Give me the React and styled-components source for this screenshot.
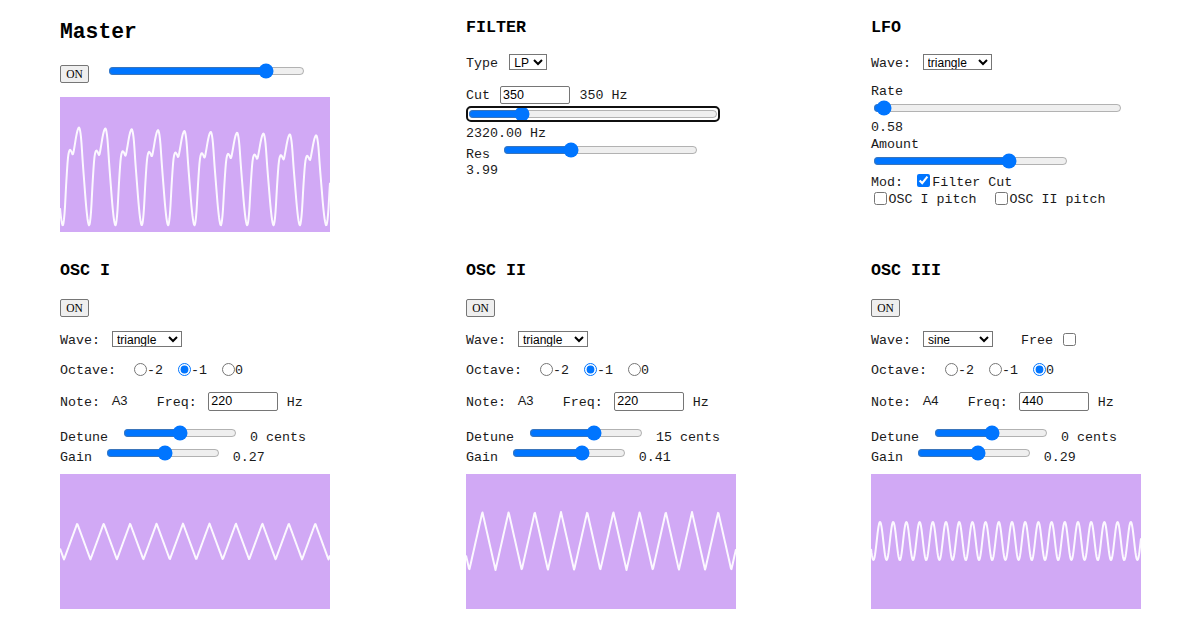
import React from "react";
import styled, { css, createGlobalStyle } from "styled-components";

// scope drawing -------------------------------------

const SCOPE_W = 270;
const SCOPE_H = 135;

const tri = phase => {
	const p = phase - Math.floor(phase);
	return 1 - 4 * Math.abs(p - 0.5);
};

// one period of the mixed master signal, 16 samples (page y inside the first scope)
const masterKeys = [225, 212, 182, 158, 150, 151, 154, 146, 136, 129, 127.5, 138, 162, 184, 205, 220];

const masterY = x => {
	const ph = (x - 3) / 26.35;
	const u = (ph - Math.floor(ph)) * 16;
	const i = Math.floor(u);
	const t = u - i;
	const k = j => masterKeys[((j % 16) + 16) % 16];
	const p0 = k(i - 1);
	const p1 = k(i);
	const p2 = k(i + 1);
	const p3 = k(i + 2);
	const v =
		0.5 *
		(2 * p1 +
			(-p0 + p2) * t +
			(2 * p0 - 5 * p1 + 4 * p2 - p3) * t * t +
			(-p0 + 3 * p1 - 3 * p2 + p3) * t * t * t);
	const s = 1 - (0.09 * x) / SCOPE_W;
	return 225 - (225 - v) * s - 97;
};

const waves = {
	master: masterY,
	osc1: x => 67.5 - 18 * tri((x - 4) / 26.45),
	osc2: x => 67 - 29 * tri((x - 3.3) / 26.2),
	osc3: x => 67 - 19 * Math.cos((2 * Math.PI * (x - 9)) / 13.2)
};

const wavePath = fn => {
	let d = "";
	for (let x = 0; x <= SCOPE_W; x += 0.5) {
		d += (x === 0 ? "M" : "L") + x.toFixed(1) + " " + fn(x).toFixed(2);
	}
	return d;
};

// components ----------------------------------------

const Scope = ({ wave, mt }) => (
	<ScopeBox $mt={mt}>
		<svg width={SCOPE_W} height={SCOPE_H}>
			<path d={wavePath(waves[wave])} fill="none" stroke="#fff" strokeWidth="2" strokeOpacity="0.92" strokeLinejoin="round" />
		</svg>
	</ScopeBox>
);

const WaveSelect = ({ value, ml, w }) => (
	<Select $ml={ml} $w={w} defaultValue={value}>
		<option>sine</option>
		<option>square</option>
		<option>sawtooth</option>
		<option>triangle</option>
	</Select>
);

const Slider = ({ value, ml, w, lift, focus }) => (
	<Range type="range" min="0" max="1000" defaultValue={value} $ml={ml} $w={w} $lift={lift} $focus={focus} />
);

const Osc = ({ title, wave, octave, note, freq, detune, gain, gainValue, detuneValue, free, scope }) => (
	<Panel>
		<Heading $size={16.67} $mt={11}>
			{title}
		</Heading>
		<Row $mt={18} $h={18}>
			<ToggleButton>ON</ToggleButton>
		</Row>
		<Row $mt={14} $h={16}>
			<Text>Wave:</Text>
			<WaveSelect value={wave} ml={12} w={69.5} />
			{free && (
				<>
					<Text $ml={28.5}>Free</Text>
					<Check type="checkbox" $ml={9.5} />
				</>
			)}
		</Row>
		<Row $mt={14.3} $h={16}>
			<Text>Octave:</Text>
			{["-2", "-1", "0"].map((o, i) => (
				<React.Fragment key={o}>
					<Radio type="radio" name={title} defaultChecked={o === octave} $ml={i === 0 ? 18 : 15} />
					<Text>{o}</Text>
				</React.Fragment>
			))}
		</Row>
		<Row $mt={15} $h={18}>
			<Text>Note:</Text>
			<NoteValue>{note}</NoteValue>
			<Text>Freq:</Text>
			<TextInput $ml={11.6} defaultValue={freq} />
			<Text $ml={9}>Hz</Text>
		</Row>
		<Row $mt={18.4} $h={16}>
			<Text>Detune</Text>
			<Slider value={detune} ml={14.7} w={114.6} lift />
			<Text $ml={12.7}>{detuneValue} cents</Text>
		</Row>
		<Row $mt={4} $h={16}>
			<Text>Gain</Text>
			<Slider value={gain} ml={14} w={114} lift />
			<Text $ml={12.7}>{gainValue}</Text>
		</Row>
		<Scope wave={scope} mt={9.3} />
	</Panel>
);

export default function App() {
	return (
		<>
			<GlobalStyle />
			<Page>
				<Panel>
					<Heading $size={21.33} $lh={26} $mt={18.5}>
						Master
					</Heading>
					<Row $mt={20.5} $h={18}>
						<ToggleButton>ON</ToggleButton>
						<Slider value={827} ml={19} w={197} lift />
					</Row>
					<Scope wave="master" mt={14} />
				</Panel>

				<Panel>
					<Heading $size={16.67} $mt={17.5}>
						FILTER
					</Heading>
					<Row $mt={16.8} $h={16}>
						<Text>Type</Text>
						<Select $ml={11.3} $w={38} defaultValue="LP">
							<option>LP</option>
							<option>HP</option>
							<option>BP</option>
						</Select>
					</Row>
					<Row $mt={15.7} $h={18}>
						<Text>Cut</Text>
						<TextInput $ml={10} defaultValue="350" />
						<Text $ml={10}>350 Hz</Text>
					</Row>
					<Row $mt={4} $h={12}>
						<Slider value={195} ml={2} w={250} focus />
					</Row>
					<Line $mt={6}>2320.00 Hz</Line>
					<Row $mt={5} $h={16}>
						<Text>Res</Text>
						<Slider value={335} ml={13.3} w={195} lift />
					</Row>
					<Line $mt={1.5}>3.99</Line>
				</Panel>

				<Panel>
					<Heading $size={16.67} $mt={17.5}>
						LFO
					</Heading>
					<Row $mt={16.8} $h={16}>
						<Text>Wave:</Text>
						<WaveSelect value="triangle" ml={11.5} w={69} />
					</Row>
					<Line $mt={13.7}>Rate</Line>
					<Row $mt={1.3} $h={16}>
						<Slider value={12} ml={2} w={249} />
					</Row>
					<Line $mt={4.2}>0.58</Line>
					<Line $mt={1.7}>Amount</Line>
					<Row $mt={0.5} $h={16}>
						<Slider value={717} ml={2} w={195} />
					</Row>
					<Row $mt={5.5} $h={15}>
						<Text>Mod:</Text>
						<Check type="checkbox" defaultChecked $ml={14.3} $lift />
						<Text $ml={2}>Filter Cut</Text>
					</Row>
					<Row $mt={2.3} $h={15}>
						<Check type="checkbox" $ml={3} />
						<Text $ml={1.5}>OSC I pitch</Text>
						<Check type="checkbox" $ml={18.5} />
						<Text $ml={1.5}>OSC II pitch</Text>
					</Row>
				</Panel>

				<Osc title="OSC I" wave="triangle" octave="-1" note="A3" freq="220" detune={500} detuneValue="0" gain={520} gainValue="0.27" scope="osc1" />
				<Osc title="OSC II" wave="triangle" octave="-1" note="A3" freq="220" detune={580} detuneValue="15" gain={630} gainValue="0.41" scope="osc2" />
				<Osc title="OSC III" wave="sine" octave="0" note="A4" freq="440" detune={510} detuneValue="0" gain={537} gainValue="0.29" scope="osc3" free />
			</Page>
		</>
	);
}

// styled components -------------------------

const GlobalStyle = createGlobalStyle`
	body {
		margin: 0;
		background: #fff;
		color: #1a1a1a;
		font-family: "Liberation Mono", "Courier New", monospace;
		font-size: 13.33px;
	}
`;

const Page = styled.div`
	display: grid;
	grid-template-columns: 406px 405px 270px;
	grid-template-rows: 250px auto;
	padding-left: 60px;
	width: 1186px;
	height: 634px;
	box-sizing: border-box;
	overflow: hidden;
`;

const Panel = styled.section`
	display: flex;
	flex-direction: column;
	align-items: flex-start;
`;

const Heading = styled.h2`
	margin: ${p => p.$mt}px 0 0;
	font-size: ${p => p.$size}px;
	line-height: ${p => p.$lh || 20}px;
	font-weight: bold;
	color: #000;
`;

const Row = styled.div`
	display: flex;
	align-items: center;
	height: ${p => p.$h}px;
	margin-top: ${p => p.$mt}px;
	white-space: pre;
`;

const Text = styled.span`
	margin: 2px 0 0 ${p => p.$ml || 0}px;
	line-height: 15px;
	white-space: pre;
`;

const Line = styled.div`
	margin-top: ${p => p.$mt}px;
	line-height: 15px;
`;

const NoteValue = styled.span`
	width: 45px;
	margin: -2px 0 0 11.7px;
	font: 13px "Liberation Sans", Arial, sans-serif;
`;

const ToggleButton = styled.button`
	width: 29px;
	height: 18px;
	padding: 0;
	font: 11.5px "Liberation Serif", "Times New Roman", serif;
	color: #000;
	background: #efefef;
	border: 1px solid #767676;
	border-radius: 2px;
`;

const Select = styled.select`
	width: ${p => p.$w}px;
	height: 16px;
	margin: 0 0 0 ${p => p.$ml || 0}px;
	padding: 0;
	font: 12px "Liberation Sans", Arial, sans-serif;
	color: #000;
	background: #fff;
	border: 1px solid #767676;
	border-radius: 0;
`;

const TextInput = styled.input`
	box-sizing: border-box;
	width: 69.5px;
	height: 18.4px;
	margin: 0 0 0 ${p => p.$ml || 0}px;
	padding: 1px 2px;
	font: 12.5px "Liberation Sans", Arial, sans-serif;
	color: #000;
	border: 1px solid #767676;
	border-radius: 2px;
`;

const Range = styled.input`
	width: ${p => p.$w}px;
	height: 16px;
	margin: ${p => (p.$lift ? -7 : 0)}px 0 0 ${p => p.$ml || 0}px;
	padding: 0;
	${p =>
		p.$focus &&
		css`
			height: 12px;
			outline: 2px solid #101010;
			border-radius: 3px;
		`}
`;

const Radio = styled.input`
	width: 13px;
	height: 13px;
	margin: 0 0 0 ${p => p.$ml || 0}px;
`;

const Check = styled.input`
	width: 13px;
	height: 13px;
	margin: ${p => (p.$lift ? -3 : 0)}px 0 0 ${p => p.$ml || 0}px;
`;

const ScopeBox = styled.div`
	width: ${SCOPE_W}px;
	height: ${SCOPE_H}px;
	margin-top: ${p => p.$mt}px;
	background: #d1a9f5;
	svg {
		display: block;
	}
`;
